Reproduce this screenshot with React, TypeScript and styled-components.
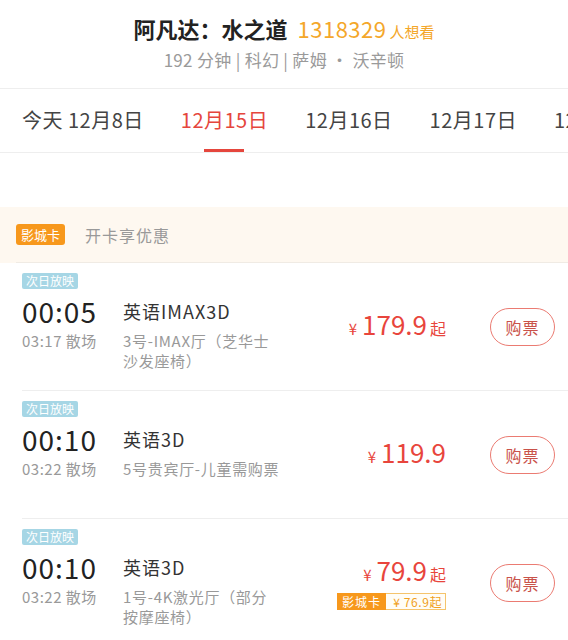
import styled, { createGlobalStyle } from "styled-components";

const Global = createGlobalStyle`
  body {
    margin: 0;
    background: #fff;
    font-family: "Noto Sans CJK SC", "Noto Sans", sans-serif;
  }
`;

const Page = styled.div`
  width: 568px;
  height: 640px;
  overflow: hidden;
  background: #fff;
`;

const Header = styled.div`
  box-sizing: border-box;
  height: 89px;
  padding-top: 13px;
  border-bottom: 1px solid #eeeeee;
  text-align: center;
`;

const Title = styled.div`
  font-size: 22px;
  line-height: 30px;
  font-weight: bold;
  color: #222;
  .num {
    font-weight: normal;
    color: #f4a72a;
    margin-left: 10px;
    letter-spacing: 0.5px;
  }
  .want {
    font-weight: normal;
    font-size: 15px;
    color: #f4a72a;
    margin-left: 3px;
  }
`;

const Sub = styled.div`
  font-size: 17px;
  line-height: 26px;
  color: #9a9a9a;
  letter-spacing: 0.3px;
`;

const Tabs = styled.div`
  box-sizing: border-box;
  height: 64px;
  display: flex;
  gap: 37px;
  padding-left: 22px;
  white-space: pre;
  overflow: hidden;
  border-bottom: 1px solid #eeeeee;
`;

const Tab = styled.div<{ $active?: boolean }>`
  position: relative;
  flex-shrink: 0;
  font-size: 20px;
  line-height: 62px;
  letter-spacing: 0.5px;
  color: ${(p) => (p.$active ? "#e5463d" : "#444")};
  &::after {
    content: "";
    display: ${(p) => (p.$active ? "block" : "none")};
    position: absolute;
    left: 50%;
    bottom: 0;
    width: 40px;
    margin-left: -20px;
    height: 3px;
    background: #e5463d;
  }
`;

const Spacer = styled.div`
  height: 54px;
`;

const Banner = styled.div`
  background: #fef8f0;
  padding-left: 16px;
`;

const BannerInner = styled.div`
  height: 55px;
  display: flex;
  align-items: center;
  border-bottom: 1px solid #f0ebe4;
`;

const CardTag = styled.span`
  font-size: 13px;
  line-height: 21px;
  padding: 0 5px;
  border-radius: 3px;
  background: #f7981c;
  color: #fff;
`;

const BannerText = styled.span`
  margin-left: 20px;
  font-size: 16px;
  letter-spacing: 1px;
  color: #999;
`;

const List = styled.div`
  padding-left: 22px;
`;

const Row = styled.div`
  box-sizing: border-box;
  height: 128px;
  display: flex;
  align-items: center;
  padding-right: 13px;
  border-bottom: 1px solid #eeeeee;
`;

const Info = styled.div`
  align-self: flex-start;
  display: flex;
  flex-direction: column;
  align-items: flex-start;
  padding-top: 10px;
`;

const NextDay = styled.span`
  font-size: 12px;
  line-height: 16px;
  padding: 0 4px;
  border-radius: 2px;
  background: #a6d6e5;
  color: #fff;
`;

const Grid = styled.div`
  display: grid;
  grid-template-columns: 101px 175px;
  margin-top: 5px;
`;

const Time = styled.div`
  font-size: 28px;
  line-height: 34px;
  letter-spacing: 1px;
  color: #222;
`;

const Lang = styled.div`
  font-size: 18px;
  line-height: 34px;
  letter-spacing: 1px;
  color: #333;
`;

const End = styled.div`
  margin-top: 3px;
  font-size: 15px;
  line-height: 20px;
  letter-spacing: 0.5px;
  color: #999;
`;

const Hall = styled.div`
  margin-top: 3px;
  font-size: 15px;
  line-height: 20px;
  letter-spacing: 0.7px;
  color: #999;
  white-space: pre-line;
`;

const PriceBlock = styled.div`
  margin-left: auto;
  display: flex;
  flex-direction: column;
  align-items: flex-end;
`;

const Price = styled.div`
  color: #e8453c;
  line-height: 30px;
  .yen {
    font-size: 15px;
    margin-right: 5px;
  }
  .amt {
    font-size: 26px;
  }
  .qi {
    font-size: 16px;
    margin-left: 3px;
  }
`;

const CardPrice = styled.div`
  display: flex;
  margin-top: 3px;
  height: 17px;
  font-size: 12px;
  line-height: 17px;
  .k {
    background: #f7981c;
    color: #fff;
    padding: 0 5px;
    letter-spacing: 1px;
  }
  .v {
    box-sizing: border-box;
    border: 1px solid #f5c46c;
    border-left: none;
    background: #fffdf6;
    color: #f0a020;
    line-height: 15px;
    padding: 0 3px 0 7px;
    letter-spacing: 0.6px;
  }
`;

const BuyButton = styled.button`
  margin-left: 44px;
  width: 65px;
  height: 38px;
  border: 1.5px solid #eb7b72;
  border-radius: 19px;
  background: #fff;
  color: #c9524a;
  font-family: inherit;
  font-size: 16px;
  letter-spacing: 1px;
  padding: 0;
`;

type Show = {
  start: string;
  end: string;
  lang: string;
  hall: string;
  price: string;
  qi: boolean;
  card?: string;
};

const shows: Show[] = [
  { start: "00:05", end: "03:17 散场", lang: "英语IMAX3D", hall: "3号-IMAX厅（芝华士\n沙发座椅）", price: "179.9", qi: true },
  { start: "00:10", end: "03:22 散场", lang: "英语3D", hall: "5号贵宾厅-儿童需购票", price: "119.9", qi: false },
  { start: "00:10", end: "03:22 散场", lang: "英语3D", hall: "1号-4K激光厅（部分\n按摩座椅）", price: "79.9", qi: true, card: "¥ 76.9起" },
];

const dates = ["今天 12月8日", "12月15日", "12月16日", "12月17日", "12月18日"];

export default function App() {
  return (
    <Page>
      <Global />
      <Header>
        <Title>
          阿凡达：水之道<span className="num">1318329</span>
          <span className="want">人想看</span>
        </Title>
        <Sub>192 分钟 | 科幻 | 萨姆 · 沃辛顿</Sub>
      </Header>
      <Tabs>
        {dates.map((d, i) => (
          <Tab key={d} $active={i === 1}>{d}</Tab>
        ))}
      </Tabs>
      <Spacer />
      <Banner>
        <BannerInner>
          <CardTag>影城卡</CardTag>
          <BannerText>开卡享优惠</BannerText>
        </BannerInner>
      </Banner>
      <List>
        {shows.map((s, i) => (
          <Row key={i}>
            <Info>
              <NextDay>次日放映</NextDay>
              <Grid>
                <Time>{s.start}</Time>
                <Lang>{s.lang}</Lang>
                <End>{s.end}</End>
                <Hall>{s.hall}</Hall>
              </Grid>
            </Info>
            <PriceBlock>
              <Price>
                <span className="yen">¥</span>
                <span className="amt">{s.price}</span>
                {s.qi && <span className="qi">起</span>}
              </Price>
              {s.card && (
                <CardPrice>
                  <span className="k">影城卡</span>
                  <span className="v">{s.card}</span>
                </CardPrice>
              )}
            </PriceBlock>
            <BuyButton>购票</BuyButton>
          </Row>
        ))}
      </List>
    </Page>
  );
}
